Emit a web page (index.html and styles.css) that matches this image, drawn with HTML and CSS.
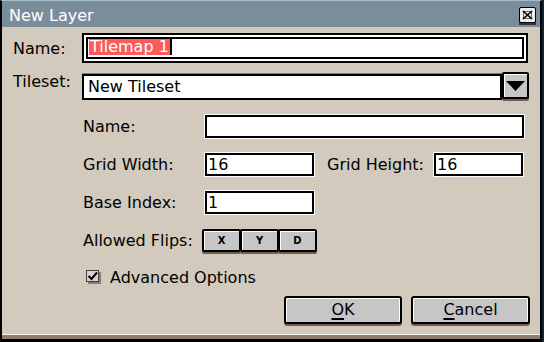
FILE: index.html
```html
<html>
    <head>
        <title>New Layer</title>
        <link rel="stylesheet" href="styles.css">
    </head>
    <body>
        <div class="dialog">
            <div class="titlebar">
                <span class="title">New Layer</span>
                <svg class="close" width="17" height="19" viewBox="0 0 17 19">
                    <rect x="0" y="14" width="17" height="4" fill="#3b3330" />
                    <rect x="0.5" y="0.5" width="16" height="15" rx="1.5" fill="#eeeeee" stroke="#000" />
                    <rect x="4.5" y="4.5" width="8" height="7" fill="none" stroke="#6a6a6a" />
                    <path d="M4 4 L13 12 M13 4 L4 12" stroke="#000" stroke-width="1.6" />
                </svg>
            </div>
            <div class="content">
                <div class="row name-row">
                    <span class="label">Name:</span>
                    <div class="entry focused"><span class="selection">Tilemap 1</span><span class="caret"></span></div>
                </div>
                <div class="row">
                    <span class="label top">Tileset:</span>
                    <div class="tileset">
                        <div class="combo">
                            <div class="combo-field">New Tileset</div>
                            <div class="combo-button">
                                <svg width="19" height="10" viewBox="0 0 19 10"><polygon points="0,0 19,0 9.5,10" fill="#000" /></svg>
                            </div>
                        </div>
                        <div class="subform">
                            <span class="sublabel">Name:</span>
                            <div class="entry"></div>

                            <span class="sublabel">Grid Width:</span>
                            <div class="pair">
                                <div class="entry short">16</div>
                                <span class="sublabel inner">Grid Height:</span>
                                <div class="entry grow">16</div>
                            </div>

                            <span class="sublabel">Base Index:</span>
                            <div class="pair">
                                <div class="entry short">1</div>
                            </div>

                            <span class="sublabel">Allowed Flips:</span>
                            <div class="flips">
                                <button class="flip">X</button><button class="flip">Y</button><button class="flip">D</button>
                            </div>

                            <div class="check">
                                <svg width="16" height="15" viewBox="0 0 16 15">
                                    <rect x="2" y="2" width="13" height="12" fill="#8e7b70" />
                                    <rect x="0.5" y="0.5" width="12" height="11" fill="#d6d2cc" stroke="#4a3f3a" />
                                    <path d="M2.5 6 L5.5 9 L11 2.5" fill="none" stroke="#000" stroke-width="2" />
                                </svg>
                                <span>Advanced Options</span>
                            </div>
                        </div>
                    </div>
                </div>
                <div class="actions">
                    <button class="btn ok"><u>O</u>K</button>
                    <button class="btn cancel"><u>C</u>ancel</button>
                </div>
            </div>
        </div>
    </body>
</html>
```

FILE: styles.css
```css
body {
    margin: 0;
    background: #0f2434;
    font-family: "DejaVu Sans", sans-serif;
    font-size: 16px;
    color: #000;
}
.dialog {
    box-sizing: border-box;
    width: 542px;
    height: 342px;
    background: #d3cabe;
    border-top: 1px solid #a6bdca;
    border-left: 2px solid #000;
    border-right: 2px solid #000;
    border-bottom: 3px solid #000;
    box-shadow: inset 0 -4px 0 #8f7d71, inset 0 -5px 0 #f6f2ec;
    display: flex;
    flex-direction: column;
}
.titlebar {
    box-sizing: border-box;
    height: 26px;
    background: #7b8d9a;
    display: flex;
    justify-content: space-between;
    align-items: flex-start;
    padding: 0 4px 0 7px;
}
.title {
    color: #fff;
    padding-top: 3px;
    line-height: 23px;
}
.close {
    display: block;
    margin-top: 6px;
}
.content {
    padding: 6px 12px 0 11px;
    display: flex;
    flex-direction: column;
}
.row {
    display: flex;
    align-items: center;
}
.row + .row {
    margin-top: 9px;
    align-items: flex-start;
}
.label {
    width: 69px;
    flex: none;
}
.entry {
    box-sizing: border-box;
    height: 23px;
    flex: 1;
    background: #fff;
    border: 2px solid #000;
    box-shadow: 0 0 0 1px #fff;
    line-height: 19px;
    padding-left: 1px;
}
.entry.focused {
    height: 30px;
    box-shadow: inset 0 0 0 2px #fff, inset 0 0 0 4px #000;
    padding: 4px 0 0 5px;
    display: flex;
    align-items: flex-start;
}
.selection {
    background: #fd5a5a;
    color: #fff;
    line-height: 16px;
    padding: 0 1px 0 1px;
}
.caret {
    width: 2px;
    height: 16px;
    background: #000;
}
.tileset {
    flex: 1;
    display: flex;
    flex-direction: column;
}
.combo {
    display: flex;
    align-items: flex-start;
}
.combo-field {
    box-sizing: border-box;
    flex: 1;
    height: 26px;
    margin-top: 2px;
    background: #fff;
    border: 2px solid #000;
    box-shadow: 0 -1px 0 #8d7b70;
    line-height: 22px;
    padding-left: 4px;
}
.combo-button {
    box-sizing: border-box;
    width: 27px;
    height: 27px;
    margin-right: -1px;
    background: #c6c6c6;
    border: 2px solid #000;
    border-radius: 2px;
    box-shadow: inset 1px 1px 0 #fff, 0 2px 0 #6f5f56;
    display: flex;
    align-items: center;
    justify-content: center;
}
.combo-button svg {
    display: block;
    margin-top: 1px;
}
.subform {
    margin: 15px 4px 0 0;
    display: grid;
    grid-template-columns: 123px 1fr;
    row-gap: 15px;
    align-items: center;
}
.sublabel {
    padding-left: 1px;
}
.sublabel.inner {
    padding: 0 10px 0 13px;
}
.pair {
    display: flex;
    align-items: center;
}
.entry.short {
    flex: none;
    width: 109px;
}
.entry.grow {
    flex: 1;
    margin-right: 1px;
}
.flips {
    display: flex;
    margin-left: -3px;
}
.flip {
    box-sizing: border-box;
    width: 39px;
    height: 23px;
    margin: 0 0 0 -1px;
    padding: 0;
    background: #c6c6c6;
    border: 2px solid #000;
    border-radius: 2px;
    box-shadow: inset 1px 1px 0 #fff, 0 2px 0 #6f5f56;
    font-family: "DejaVu Sans", sans-serif;
    font-weight: bold;
    font-size: 10px;
    color: #000;
}
.flip:first-child {
    margin-left: 0;
}
.check {
    grid-column: 1 / 3;
    margin-top: 1px;
    padding-left: 4px;
    display: flex;
    align-items: center;
}
.check svg {
    display: block;
    margin-right: 8px;
}
.actions {
    margin: 9px -2px 0 0;
    display: flex;
    justify-content: flex-end;
    gap: 9px;
}
.btn {
    box-sizing: border-box;
    height: 28px;
    padding: 0;
    background: #c6c6c6;
    border: 2px solid #000;
    border-radius: 3px;
    box-shadow: inset 1px 1px 0 #fff, inset -1px 0 0 #fff, 0 2px 0 #6f5f56;
    font-family: "DejaVu Sans", sans-serif;
    font-size: 16px;
    line-height: 24px;
    color: #000;
}
.btn u {
    text-decoration-thickness: 2px;
    text-underline-offset: 3px;
}
.ok {
    width: 118px;
}
.cancel {
    width: 119px;
}
```
